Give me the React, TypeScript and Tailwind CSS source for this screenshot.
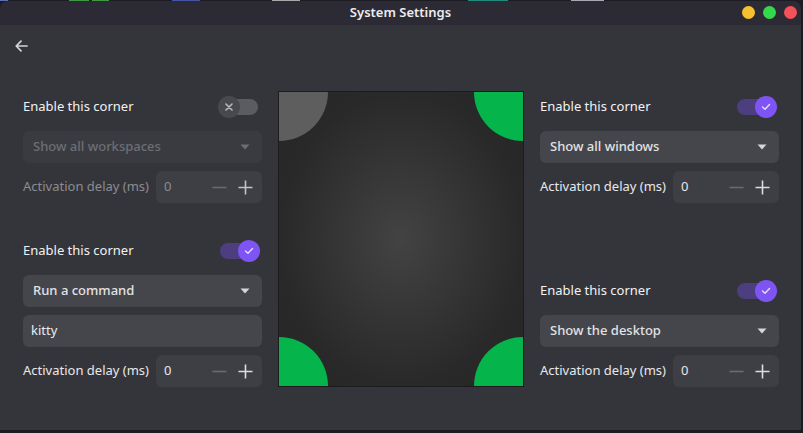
import { ReactNode } from "react";

const font = "font-['Noto_Sans',sans-serif]";

function Toggle({ on }: { on: boolean }) {
    if (!on) {
        return (
            <div className="relative w-[42px] h-[22px]">
                <div className="absolute left-[2px] right-[2px] top-[3px] h-[16px] rounded-full bg-[#5b5c62]" />
                <div className="absolute left-0 top-0 w-[22px] h-[22px] rounded-full bg-[#48494f] flex items-center justify-center">
                    <svg width="8" height="8" viewBox="0 0 8 8">
                        <path d="M1 1L7 7M7 1L1 7" stroke="#b9b9bd" strokeWidth="1.6" strokeLinecap="round" />
                    </svg>
                </div>
            </div>
        );
    }
    return (
        <div className="relative w-[42px] h-[22px]">
            <div className="absolute left-[2px] right-[2px] top-[3px] h-[16px] rounded-full bg-[#4d3f7f]" />
            <div className="absolute right-0 top-0 w-[22px] h-[22px] rounded-full bg-[#7e55f4] flex items-center justify-center">
                <svg width="10" height="8" viewBox="0 0 10 8">
                    <path d="M1.5 4L4 6.3L8.5 1.5" stroke="#e4dcff" strokeWidth="1.4" fill="none" strokeLinecap="round" strokeLinejoin="round" />
                </svg>
            </div>
        </div>
    );
}

function Row({ children }: { children: ReactNode }) {
    return <div className="h-[32px] flex items-center justify-between">{children}</div>;
}

function EnableRow({ on }: { on: boolean }) {
    return (
        <Row>
            <span className="text-[13px] text-[#f2f2f2]">Enable this corner</span>
            <div className="mr-[2px]">
                <Toggle on={on} />
            </div>
        </Row>
    );
}

function Dropdown({ label, disabled }: { label: string; disabled?: boolean }) {
    return (
        <div
            className={`h-[32px] rounded-[6px] flex items-center justify-between pl-[10px] pr-[12px] ${
                disabled ? "bg-[#3a3b41]" : "bg-[#45464c]"
            }`}
        >
            <span className={`text-[13px] font-medium ${disabled ? "text-[#6d6e74]" : "text-[#e2e2e4]"}`}>{label}</span>
            <svg width="10" height="6" viewBox="0 0 10 6">
                <path d="M0.5 0.5H9.5L5 5.5Z" fill={disabled ? "#6d6e74" : "#d6d6d8"} />
            </svg>
        </div>
    );
}

function DelayRow({ disabled }: { disabled?: boolean }) {
    return (
        <Row>
            <span className={`text-[13px] ${disabled ? "text-[#8b8c91]" : "text-[#e8e8ea]"}`}>Activation delay (ms)</span>
            <div className="w-[106px] h-[32px] rounded-[6px] bg-[#3e3f45] flex items-center pl-[8px] pr-[9px]">
                <span className={`text-[13px] flex-1 ${disabled ? "text-[#8b8c91]" : "text-[#e8e8ea]"}`}>0</span>
                <svg width="15" height="15" viewBox="0 0 15 15" className="mr-[11px]">
                    <path d="M0.5 7.5H14.5" stroke="#6a6b70" strokeWidth="1.6" />
                </svg>
                <svg width="15" height="15" viewBox="0 0 15 15">
                    <path d="M0.5 7.5H14.5M7.5 0.5V14.5" stroke={disabled ? "#c4c4c8" : "#dcdcde"} strokeWidth="1.6" />
                </svg>
            </div>
        </Row>
    );
}

function Preview() {
    return (
        <div className="relative w-[246px] h-[296px] border border-[#1c1c1e] overflow-hidden bg-[radial-gradient(ellipse_at_center,#434343_0%,#363636_35%,#292929_70%,#262626_100%)]">
            <div className="absolute left-0 top-0 w-[49px] h-[49px] rounded-br-[49px] bg-[#5e5e5e]" />
            <div className="absolute right-0 top-0 w-[49px] h-[49px] rounded-bl-[49px] bg-[#05b54c]" />
            <div className="absolute left-0 bottom-0 w-[49px] h-[49px] rounded-tr-[49px] bg-[#05b54c]" />
            <div className="absolute right-0 bottom-0 w-[49px] h-[49px] rounded-tl-[49px] bg-[#05b54c]" />
        </div>
    );
}

export default function App() {
    return (
        <div className={`w-[803px] h-[433px] bg-[#1d1c22] overflow-hidden flex flex-col ${font}`}>
            <div className="h-px flex shrink-0">
                <div className="w-[8px] bg-[#5a6fc0]" />
                <div className="w-[61px]" />
                <div className="w-[20px] bg-[#3f9a45]" />
                <div className="w-[3px]" />
                <div className="w-[17px] bg-[#3f9a45]" />
                <div className="w-[63px]" />
                <div className="w-[28px] bg-[#4553a8]" />
                <div className="w-[72px]" />
                <div className="w-[28px] bg-[#a8a8aa]" />
                <div className="w-[168px]" />
                <div className="w-[40px] bg-[#1f8a7e]" />
                <div className="w-[63px]" />
                <div className="w-[33px] bg-[#a8a8b0]" />
            </div>
            <div className="w-[802px] h-[430px] rounded-t-[8px] overflow-hidden flex flex-col border-r border-b border-[#1a1a1f]">
                <div className="relative h-[24px] shrink-0 bg-[#2c2a34] flex items-center justify-center">
                    <span className="text-[13px] font-semibold text-[#ececee]">System Settings</span>
                    <div className="absolute right-[4px] top-[5px] flex gap-[8px]">
                        <div className="w-[13px] h-[13px] rounded-full bg-[#f6c12f]" />
                        <div className="w-[13px] h-[13px] rounded-full bg-[#33d94a]" />
                        <div className="w-[13px] h-[13px] rounded-full bg-[#f4515a]" />
                    </div>
                </div>
                <div className="flex-1 bg-[#34353b] flex flex-col">
                    <div className="h-[66px] flex items-start pt-[15px] pl-[15px]">
                        <svg width="13" height="12" viewBox="0 0 13 12">
                            <path d="M12 6H1.5M6 1.2L1.2 6L6 10.8" stroke="#d4d4d6" strokeWidth="1.7" fill="none" strokeLinecap="round" strokeLinejoin="round" />
                        </svg>
                    </div>
                    <div className="flex gap-4 pl-[23px]">
                        <div className="w-[239px] h-[296px] flex flex-col justify-between">
                            <div className="flex flex-col gap-2">
                                <EnableRow on={false} />
                                <Dropdown label="Show all workspaces" disabled />
                                <DelayRow disabled />
                            </div>
                            <div className="flex flex-col gap-2">
                                <EnableRow on />
                                <Dropdown label="Run a command" />
                                <div className="h-[32px] rounded-[6px] bg-[#45464c] flex items-center pl-[8px]">
                                    <span className="text-[13px] text-[#ececee]">kitty</span>
                                </div>
                                <DelayRow />
                            </div>
                        </div>
                        <Preview />
                        <div className="w-[239px] h-[296px] flex flex-col justify-between">
                            <div className="flex flex-col gap-2">
                                <EnableRow on />
                                <Dropdown label="Show all windows" />
                                <DelayRow />
                            </div>
                            <div className="flex flex-col gap-2">
                                <EnableRow on />
                                <Dropdown label="Show the desktop" />
                                <DelayRow />
                            </div>
                        </div>
                    </div>
                </div>
            </div>
        </div>
    );
}
